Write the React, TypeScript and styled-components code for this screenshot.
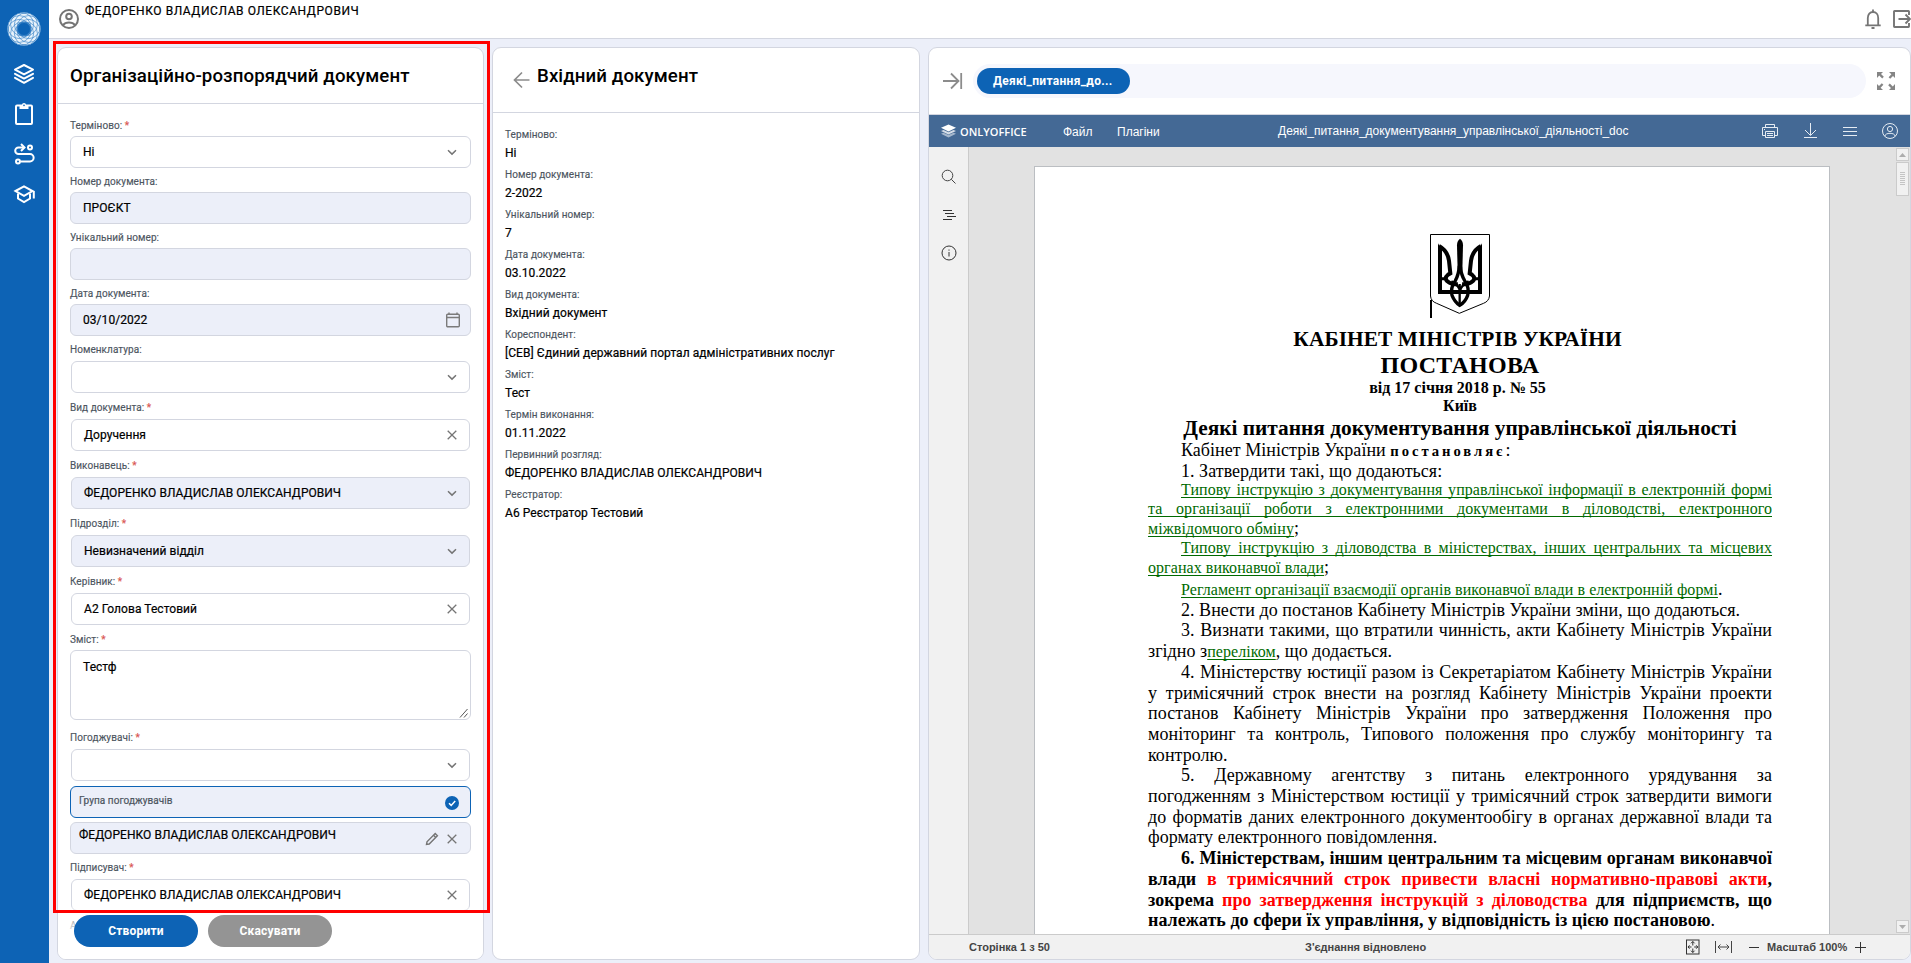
import React from "react";
import styled, { createGlobalStyle } from "styled-components";

const GlobalStyle = createGlobalStyle`
  * { box-sizing: border-box; }
  html, body { margin: 0; padding: 0; overflow: hidden; }
  body { font-family: Roboto, "Liberation Sans", sans-serif; color: #000; }
  svg { display: block; flex: none; }
`;

const line = "#d3d6e0";

/* ---------- shell ---------- */
const Shell = styled.div`
  display: flex;
  width: 1911px;
  height: 963px;
  background: #eceff9;
  overflow: hidden;
`;
const Sidebar = styled.nav`
  flex: 0 0 49px;
  background: #0d63b5;
  display: flex;
  flex-direction: column;
  align-items: center;
  padding: 12px 1px 0 0;
`;
const NavItem = styled.a`
  width: 22px;
  height: 22px;
  margin-bottom: 18px;
`;
const LogoLink = styled.a`
  margin-bottom: 17px;
`;
const Main = styled.div`
  flex: 1;
  min-width: 0;
  display: flex;
  flex-direction: column;
`;
const TopBar = styled.header`
  flex: 0 0 39px;
  background: #fff;
  border-bottom: 1px solid ${line};
  display: flex;
  padding-left: 9px;
`;
const UserIcon = styled.div`
  padding-top: 8px;
`;
const UserName = styled.div`
  margin-left: 5px;
  font-size: 12px;
  font-weight: 400;
  -webkit-text-stroke: 0.2px;
  letter-spacing: 0.57px;
  line-height: 22px;
`;
const TopActions = styled.div`
  margin-left: auto;
  display: flex;
  gap: 8px;
  padding-top: 8px;
  width: 48px;
`;
const Columns = styled.div`
  flex: 1;
  min-height: 0;
  display: flex;
  gap: 8px;
  padding: 8px 0 3px 8px;
`;
const Card = styled.section<{ $w?: number }>`
  ${(p) => (p.$w ? `flex: 0 0 ${p.$w}px;` : "flex: 1; min-width: 0;")}
  position: relative;
  background: #fff;
  border: 1px solid ${line};
  border-radius: 9px;
  overflow: hidden;
  display: flex;
  flex-direction: column;
`;
const Frame = styled.div`
  position: absolute;
  left: 53px;
  top: 41px;
  width: 437px;
  height: 872px;
  border: 3px solid #f00;
  pointer-events: none;
`;

/* ---------- form card ---------- */
const CardHead = styled.div<{ $h: number }>`
  flex: 0 0 ${(p) => p.$h}px;
  border-bottom: 1px solid ${line};
  display: flex;
  padding: 14px 12px 0;
`;
const Title = styled.h1`
  margin: 0;
  font-size: 18.67px;
  font-weight: 500;
  letter-spacing: 0.1px;
  line-height: 28px;
`;
const FormBody = styled.div`
  flex: 1;
  min-height: 0;
  overflow: hidden;
  padding: 8px 12px 0;
`;
const FieldLabel = styled.div<{ $gap?: number }>`
  height: 24px;
  margin-top: ${(p) => p.$gap || 0}px;
  padding-top: 3px;
  font-size: 10px;
  line-height: 21px;
  font-weight: 400;
  -webkit-text-stroke: 0.15px;
  letter-spacing: 0.06px;
  color: #4d565f;
  white-space: nowrap;
`;
const Star = styled.span`
  color: #d9534f;
`;
const Control = styled.div<{ $off?: boolean; $select?: boolean; $active?: boolean; $tall?: boolean }>`
  height: ${(p) => (p.$tall ? 70 : 32)}px;
  margin: ${(p) => (p.$select ? "1px" : "0")};
  border: 1px solid ${(p) => (p.$active ? "#0d63b5" : line)};
  border-radius: 6px;
  background: ${(p) => (p.$off || p.$active ? "#eceff9" : "#fff")};
  display: flex;
  align-items: ${(p) => (p.$tall ? "flex-start" : "center")};
  justify-content: space-between;
  padding: ${(p) => (p.$tall ? 1 : 0)}px ${(p) => (p.$select ? 10 : 11)}px 0 12px;
  font-size: 12px;
  font-weight: 400;
  -webkit-text-stroke: 0.2px;
  letter-spacing: 0.05px;
  line-height: 30px;
  white-space: nowrap;
`;
const Grip = styled.div`
  align-self: flex-end;
  margin: 0 -10px 1px 0;
`;
const Approver = styled(Control)`
  margin-top: ${(p) => (p.$active ? 5 : 4)}px;
  padding: 0 11px 0 8px;
`;
const ApproverText = styled.span<{ $small?: boolean }>`
  font-size: ${(p) => (p.$small ? 10 : 12)}px;
  font-weight: 400;
  letter-spacing: 0.05px;
  color: ${(p) => (p.$small ? "#4d565f" : "#000")};
  padding-bottom: ${(p) => (p.$small ? 3 : 7)}px;
`;
const IconRow = styled.span`
  display: flex;
  gap: 6px;
  align-items: center;
  padding-top: 2px;
`;
const CalendarSlot = styled.span`
  margin-right: -1px;
`;
const Actions = styled.div`
  position: absolute;
  left: 0;
  right: 0;
  bottom: 0;
  height: 52px;
  padding: 8px 0 0 16px;
  display: flex;
  gap: 10px;
  background: linear-gradient(rgba(255, 255, 255, 0.2), #fff 60%);
`;
const Pill = styled.button<{ $muted?: boolean }>`
  width: 124px;
  height: 32px;
  border: 0;
  border-radius: 16px;
  background: ${(p) => (p.$muted ? "#949494" : "#0d63b5")};
  color: #fff;
  font: 700 12px/32px Roboto, sans-serif;
  letter-spacing: 0.2px;
  padding: 0;
`;

/* ---------- info card ---------- */
const Back = styled.div`
  margin: 9px 6px 0 8px;
`;
const InfoBody = styled.dl`
  margin: 0;
  padding: 11px 12px 0;
`;
const InfoLabel = styled.dt`
  font-size: 10px;
  font-weight: 400;
  -webkit-text-stroke: 0.15px;
  letter-spacing: 0.08px;
  color: #4d565f;
  height: 20px;
  line-height: 22px;
`;
const InfoValue = styled.dd`
  margin: 0;
  font-size: 12px;
  font-weight: 400;
  -webkit-text-stroke: 0.2px;
  letter-spacing: 0.05px;
  height: 20px;
  line-height: 18px;
  white-space: nowrap;
`;

/* ---------- viewer card ---------- */
const TabsBar = styled.div`
  flex: 0 0 67px;
  border-bottom: 1px solid ${line};
  display: flex;
  align-items: center;
  padding: 0 15px 0 13px;
`;
const TabStrip = styled.div`
  flex: 1;
  height: 34px;
  margin: 0 11px 0 10px;
  border-radius: 17px;
  background: #f6f7fd;
  padding: 4px;
`;
const Tab = styled.div`
  width: 153px;
  height: 26px;
  border-radius: 13px;
  background: #0d63b5;
  color: #fff;
  font-size: 12px;
  font-weight: 700;
  letter-spacing: 0.3px;
  line-height: 26px;
  padding-left: 16px;
`;
const Toolbar = styled.div`
  flex: 0 0 32px;
  background: #446995;
  color: #fff;
  display: flex;
  align-items: center;
  font: 12px "Liberation Sans", Arial, sans-serif;
  padding-left: 12px;
`;
const Brand = styled.span`
  width: 107px;
  padding-left: 4px;
  font: 600 11px "Open Sans", sans-serif;
`;
const MenuEntry = styled.span<{ $w: number }>`
  width: ${(p) => p.$w}px;
  padding-top: 1px;
`;
const DocName = styled.span`
  width: 482px;
  white-space: nowrap;
`;
const ToolIcons = styled.div`
  display: flex;
  align-items: center;
  gap: 20px;
`;
const Work = styled.div`
  flex: 1;
  min-height: 0;
  display: flex;
  background: #e2e2e2;
`;
const Rail = styled.div`
  flex: 0 0 40px;
  background: #f1f1f1;
  border-right: 1px solid #cbcbcb;
  padding: 22px 0 0 12px;
  display: flex;
  flex-direction: column;
  gap: 22px;
`;
const Canvas = styled.div`
  flex: 1;
  overflow: hidden;
  padding: 19px 0 0 65px;
`;
const Page = styled.article`
  width: 796px;
  height: 900px;
  border: 1px solid #bbbec2;
  background: #fff;
  padding: 67px 56px 0 113px;
  font-family: "Liberation Serif", "Times New Roman", serif;
`;
const Emblem = styled.div`
  margin-left: 282px;
  height: 95px;
`;
type LineProps = {
  $h: number;
  $size?: number;
  $center?: boolean;
  $justify?: boolean;
  $indent?: boolean;
  $bold?: boolean;
  $ls?: number;
  $tail?: number;
};
const TextLine = styled.div<LineProps>`
  width: 624px;
  height: ${(p) => p.$h}px;
  line-height: 20px;
  font-size: ${(p) => p.$size || 18}px;
  font-weight: ${(p) => (p.$bold ? 700 : 400)};
  letter-spacing: ${(p) => p.$ls ?? 0.04}px;
  text-indent: ${(p) => (p.$indent ? 33 : 0)}px;
  padding-right: ${(p) => p.$tail || 0}px;
  white-space: nowrap;
  text-align: ${(p) => (p.$center ? "center" : "left")};
  ${(p) => p.$justify && "white-space: normal; text-align: justify; text-align-last: justify;"}
`;
const Link = styled.span`
  font-size: 16px;
  color: #006a00;
  letter-spacing: 0.06px;
  text-decoration: underline;
  text-underline-offset: 2px;
  text-decoration-thickness: 1px;
  text-decoration-skip-ink: none;
`;
const Red = styled.span`
  color: #f00;
`;
const Light = styled.span`
  font-weight: 400;
`;
const Spaced = styled.b`
  font-size: 14.67px;
  letter-spacing: 2.95px;
`;
const ScrollTrack = styled.div`
  flex: 0 0 14px;
  display: flex;
  flex-direction: column;
  padding: 1px 1px 0 0;
`;
const ScrollBox = styled.div<{ $h: number; $last?: boolean }>`
  width: 13px;
  height: ${(p) => p.$h}px;
  margin-top: ${(p) => (p.$last ? "auto" : "0")};
  margin-bottom: 1px;
  border: 1px solid #cbcbcb;
  background: #f1f1f1;
  display: flex;
  align-items: center;
  justify-content: center;
`;
const StatusBar = styled.footer`
  flex: 0 0 25px;
  background: #f1f1f1;
  border-top: 1px solid #cbcbcb;
  display: flex;
  align-items: center;
  font: bold 11px "Liberation Sans", Arial, sans-serif;
  color: #444;
  padding-left: 40px;
`;
const StatusText = styled.span<{ $w: number }>`
  width: ${(p) => p.$w}px;
  white-space: nowrap;
`;
const ZoomTools = styled.div`
  display: flex;
  align-items: center;
`;
const ZoomText = styled.span`
  width: 96px;
  padding-left: 8px;
  white-space: nowrap;
`;

/* ---------- icons ---------- */
const Logo = () => (
  <svg width="34" height="34" viewBox="-17 -17 34 34" fill="none">
    <circle r="12" stroke="#eaf3fb" strokeWidth="9" />
    {[0, 1, 2, 3, 4, 5, 6, 7].map((i) => (
      <circle
        key={i}
        r="11.5"
        cx={5 * Math.cos(((i + 0.5) * Math.PI) / 4)}
        cy={5 * Math.sin(((i + 0.5) * Math.PI) / 4)}
        stroke="#3f86c9"
        strokeWidth="0.7"
      />
    ))}
  </svg>
);
const Layers = () => (
  <svg width="22" height="22" viewBox="0 0 22 22" fill="none" stroke="#fff" strokeWidth="2" strokeLinejoin="round" strokeLinecap="round">
    <path d="M11 2 20 6.600 11 11.400 2 6.600Z" />
    <path d="M2 10.800 11 15.600 20 10.800M2 14.800 11 19.800 20 14.800" />
  </svg>
);
const Clipboard = () => (
  <svg width="22" height="22" viewBox="0 0 22 22" fill="none">
    <rect x="3" y="2.500" width="16" height="18.500" rx="1" stroke="#fff" strokeWidth="2" />
    <path d="M6.500 2H9a2 2 0 0 1 4 0h2.500v4h-9Z" fill="#fff" />
    <circle cx="11" cy="2.400" r="0.800" fill="#0d63b5" />
  </svg>
);
const Route = () => (
  <svg width="22" height="22" viewBox="0 0 22 22" fill="none" stroke="#fff" strokeWidth="2">
    <circle cx="17" cy="4.500" r="2" />
    <circle cx="5" cy="18.500" r="2" />
    <path d="M10 4.500H5.500a3.300 3.300 0 0 0 0 6.600H17a3.500 3.500 0 0 1 0 7.300H8" />
    <path d="m8 1 3.500 3.500L8 8" />
  </svg>
);
const School = () => (
  <svg width="22" height="22" viewBox="0 0 22 22" fill="none" stroke="#fff" strokeWidth="2">
    <path d="M2.500 8 11 3.300 19.500 8 11 12.800Z" />
    <path d="M5 10.500v5L11 19l6-3.500v-5M20.800 8v7.500" />
  </svg>
);
const Account = () => (
  <svg width="22" height="22" viewBox="0 0 22 22" fill="none" stroke="#757575" strokeWidth="2">
    <circle cx="11" cy="11" r="9" />
    <circle cx="11" cy="8.500" r="2.800" />
    <path d="M5 17.300c2.500-3.600 9.500-3.600 12 0" />
  </svg>
);
const Bell = () => (
  <svg width="20" height="22" viewBox="0 0 20 22" fill="none" stroke="#757575" strokeWidth="1.800">
    <path d="M2.300 17.300h15.400M4.800 17V10c0-3.600 2.200-6 5.200-6s5.200 2.400 5.200 6v7" />
    <path d="M10 4V1.500M8.500 20h3" />
  </svg>
);
const Exit = () => (
  <svg width="20" height="22" viewBox="0 0 20 22" fill="none" stroke="#757575" strokeWidth="1.900">
    <path d="M18 7V3.500Q18 3 17.500 3H3.500Q3 3 3 3.500V18.500q0 .5.500.5h14q.5 0 .5-.5V15" />
    <path d="M7.500 11H19M14.500 6.500 19 11l-4.500 4.500" />
  </svg>
);
const Chevron = () => (
  <svg width="14" height="14" viewBox="0 0 14 14" fill="none" stroke="#757575" strokeWidth="1.500">
    <path d="m3 5.300 4 3.800 4-3.800" />
  </svg>
);
const Cross = () => (
  <svg width="14" height="14" viewBox="0 0 14 14" fill="none" stroke="#757575" strokeWidth="1.300">
    <path d="m2.700 2.700 8.600 8.600m0-8.600-8.600 8.600" />
  </svg>
);
const CalendarIcon = () => (
  <svg width="14" height="16" viewBox="0 0 14 16" fill="none" stroke="#7b7b7b" strokeWidth="1.400">
    <rect x="0.700" y="2.200" width="12.600" height="12.600" rx="1" />
    <path d="M.7 5.500h12.600M3 .5v2M11 .5v2" />
  </svg>
);
const CheckBadge = () => (
  <svg width="14" height="14" viewBox="0 0 14 14" fill="none">
    <circle cx="7" cy="7" r="7" fill="#0d63b5" />
    <path d="m4 7.200 2.200 2.200L10.200 5" stroke="#fff" strokeWidth="1.500" />
  </svg>
);
const Pencil = () => (
  <svg width="14" height="14" viewBox="0 0 14 14" fill="none" stroke="#757575" strokeWidth="1.400">
    <path d="M1.500 12.500l.5-2.700 8.200-8.200 2.200 2.200-8.200 8.200ZM8.600 3.200l2.200 2.200" />
  </svg>
);
const Arrow = () => (
  <svg width="18" height="18" viewBox="0 0 18 18" fill="none" stroke="#8c8c8c" strokeWidth="1.700">
    <path d="M1.500 9h15M9 1.500 1.500 9 9 16.500" />
  </svg>
);
const Collapse = () => (
  <svg width="21" height="18" viewBox="0 0 21 18" fill="none" stroke="#8c8c8c" strokeWidth="1.800">
    <path d="M1 9h15M9 1.500 16.500 9 9 16.500M19.200 1v16" />
  </svg>
);
const Expand = () => (
  <svg width="18" height="18" viewBox="0 0 18 18" fill="#858585">
    {[0, 90, 180, 270].map((r) => (
      <path key={r} transform={`rotate(${r} 9 9)`} d="M0 0h6L4 2l2.800 2.800-1.600 1.600L2.200 3.600 0 6Z" />
    ))}
  </svg>
);
const OfficeMark = () => (
  <svg width="15" height="15" viewBox="0 0 15 15">
    <path d="M0 9.800 2.500 8.700 7.500 11l5-2.300L15 9.800 7.500 13.600Z" fill="#a5b7cc" />
    <path d="M0 7 2.500 5.900l5 2.400 5-2.400L15 7l-7.500 3.600Z" fill="#d5dde7" />
    <path d="M0 3.800 7.500.5 15 3.800 7.500 7.400Z" fill="#fff" />
  </svg>
);
const PrintIcon = () => (
  <svg width="20" height="20" viewBox="0 0 20 20" fill="none" stroke="#e6ecf3">
    <path d="M5.500 6.500v-3h9v3M5.500 14.500h-3v-8h15v8h-3M5.500 10.500h9v6h-9ZM7 12.500h6M7 14.500h6M4 8.500h1" />
  </svg>
);
const SaveIcon = () => (
  <svg width="20" height="20" viewBox="0 0 20 20" fill="none" stroke="#e6ecf3">
    <path d="M10.500 2v12M5 9l5.500 5.500L16 9M4 16.500h13" />
  </svg>
);
const BurgerIcon = () => (
  <svg width="20" height="20" viewBox="0 0 20 20" fill="none" stroke="#e6ecf3">
    <path d="M3 6.500h14M3 10.500h14M3 14.500h14" />
  </svg>
);
const ProfileIcon = () => (
  <svg width="20" height="20" viewBox="0 0 20 20" fill="none" stroke="#e6ecf3">
    <circle cx="10" cy="10" r="7.500" />
    <circle cx="10" cy="8" r="2.600" />
    <path d="M4.800 15.300c0-4 10.400-4 10.400 0" />
  </svg>
);
const FindIcon = () => (
  <svg width="16" height="16" viewBox="0 0 16 16" fill="none" stroke="#444">
    <circle cx="6.500" cy="6.500" r="5.300" />
    <path d="m10.300 10.300 4.200 4.200" />
  </svg>
);
const HeadingsIcon = () => (
  <svg width="16" height="16" viewBox="0 0 16 16" fill="none" stroke="#333">
    <path d="M2 3.500h9M4 6.500h9M6 9.500h9M2 12.500h9" />
  </svg>
);
const InfoIcon = () => (
  <svg width="16" height="16" viewBox="0 0 16 16" fill="none" stroke="#333">
    <circle cx="8" cy="8" r="7" />
    <path d="M8 7v4.500M8 4.500v1.200" />
  </svg>
);
const Trident = () => (
  <svg width="61" height="85" viewBox="0 0 183 255" fill="none" stroke="#000">
    <path d="M1.500 1.500h177V186q-2 16-18 22L88 238 20 208Q3 202 1.500 186Z" strokeWidth="3" />
    <path d="M3 198v54" strokeWidth="6" />
    <path d="M30 44V174H150V44" strokeWidth="12" />
    <path d="M24 28 24 52 36 50ZM156 28 156 52 144 50Z" fill="#000" stroke="none" />
    <path d="M27 36C46 46 54 58 57 80L61 118 54 122Q42 132 52 142 66 154 84 150" strokeWidth="12" />
    <path d="M153 36C134 46 126 58 123 80L119 118 126 122Q138 132 128 142 114 154 96 150" strokeWidth="12" />
    <path d="M30 134h20M150 134h-20" strokeWidth="9" />
    <path d="M90 14q9 6 9 20l-2 78h-14l-2-78q0-14 9-20Z" fill="#000" stroke="none" />
    <path d="M88 96Q86 122 76 140 60 162 66 184 74 204 89 214 106 204 113 184 119 162 104 140 93 122 91 96" strokeWidth="10" />
    <path d="M64 142Q88 156 90 172 92 156 116 142M89 150v64" strokeWidth="7" />
  </svg>
);
const FitPage = () => (
  <svg width="14" height="16" viewBox="0 0 14 16" fill="none" stroke="#333">
    <rect x="0.500" y="1" width="12.500" height="14" />
    <path d="M6.800 2.500v4M6.800 9.500v4M2 8h3.500M8.200 8h3.600M5 4.300l1.800-1.800 1.800 1.800M5 11.700l1.800 1.800 1.800-1.800M3.500 6.300 2 8l1.500 1.700M10.200 6.300 11.800 8l-1.600 1.700" />
  </svg>
);
const FitWidth = () => (
  <svg width="17" height="12" viewBox="0 0 17 12" fill="none" stroke="#444">
    <path d="M.5 0v12M16.500 0v12M3 6h11M5.500 3.500 3 6l2.500 2.500M11.500 3.500 14 6l-2.500 2.500" />
  </svg>
);
const Minus = () => (
  <svg width="10" height="12" viewBox="0 0 10 12" stroke="#333">
    <path d="M0 6.500h10" />
  </svg>
);
const Plus = () => (
  <svg width="12" height="12" viewBox="0 0 12 12" stroke="#333">
    <path d="M0 6.500h11M5.500 1v11" />
  </svg>
);
const ResizeGrip = () => (
  <svg width="10" height="10" viewBox="0 0 10 10" stroke="#555" fill="none">
    <path d="M1 9.500 8.500 1M5 9.500 8.500 5.500" />
  </svg>
);

/* ---------- content ---------- */
const PERSON = "ФЕДОРЕНКО ВЛАДИСЛАВ ОЛЕКСАНДРОВИЧ";

const info: [string, string][] = [
  ["Терміново:", "Ні"],
  ["Номер документа:", "2-2022"],
  ["Унікальний номер:", "7"],
  ["Дата документа:", "03.10.2022"],
  ["Вид документа:", "Вхідний документ"],
  ["Кореспондент:", "[СЕВ] Єдиний державний портал адміністративних послуг"],
  ["Зміст:", "Тест"],
  ["Термін виконання:", "01.11.2022"],
  ["Первинний розгляд:", PERSON],
  ["Реєстратор:", "А6 Реєстратор Тестовий"],
];

const Label = ({ text, required, gap }: { text: string; required?: boolean; gap?: number }) => (
  <FieldLabel $gap={gap}>
    {text} {required && <Star>*</Star>}
  </FieldLabel>
);

const FormCard = () => (
  <Card $w={427}>
    <CardHead $h={56}>
      <Title>Організаційно-розпорядчий документ</Title>
    </CardHead>
    <FormBody>
      <Label text="Терміново:" required />
      <Control>Ні<Chevron /></Control>
      <Label text="Номер документа:" />
      <Control $off>ПРОЄКТ</Control>
      <Label text="Унікальний номер:" />
      <Control $off />
      <Label text="Дата документа:" />
      <Control $off>03/10/2022<CalendarSlot><CalendarIcon /></CalendarSlot></Control>
      <Label text="Номенклатура:" />
      <Control $select><span /><Chevron /></Control>
      <Label text="Вид документа:" required />
      <Control $select>Доручення<Cross /></Control>
      <Label text="Виконавець:" required />
      <Control $select $off>{PERSON}<Chevron /></Control>
      <Label text="Підрозділ:" required />
      <Control $select $off>Невизначений відділ<Chevron /></Control>
      <Label text="Керівник:" required />
      <Control $select>А2 Голова Тестовий<Cross /></Control>
      <Label text="Зміст:" required />
      <Control $tall>Тестф<Grip><ResizeGrip /></Grip></Control>
      <Label text="Погоджувачі:" required gap={4} />
      <Control $select><span /><Chevron /></Control>
      <Approver $active>
        <ApproverText $small>Група погоджувачів</ApproverText>
        <IconRow><CheckBadge /></IconRow>
      </Approver>
      <Approver $off>
        <ApproverText>{PERSON}</ApproverText>
        <IconRow><Pencil /><Cross /></IconRow>
      </Approver>
      <Label text="Підписувач:" required />
      <Control $select>{PERSON}<Cross /></Control>
      <Label text="А" />
    </FormBody>
    <Actions>
      <Pill>Створити</Pill>
      <Pill $muted>Скасувати</Pill>
    </Actions>
  </Card>
);

const InfoCard = () => (
  <Card $w={428}>
    <CardHead $h={65}>
      <Back><Arrow /></Back>
      <Title>Вхідний документ</Title>
    </CardHead>
    <InfoBody>
      {info.map(([k, v]) => (
        <React.Fragment key={k}>
          <InfoLabel>{k}</InfoLabel>
          <InfoValue>{v}</InfoValue>
        </React.Fragment>
      ))}
    </InfoBody>
  </Card>
);

const DocumentText = () => (
  <>
    <TextLine $h={26} $size={21.33} $center $bold $ls={0.1} $tail={5}>КАБІНЕТ МІНІСТРІВ УКРАЇНИ</TextLine>
    <TextLine $h={23} $size={24} $center $bold $ls={0.3}>ПОСТАНОВА</TextLine>
    <TextLine $h={18} $size={16} $center $bold $ls={0} $tail={5}>від 17 січня 2018 р. № 55</TextLine>
    <TextLine $h={22} $size={16} $center $bold $ls={0}>Київ</TextLine>
    <TextLine $h={22} $size={21.33} $center $bold $ls={0}>Деякі питання документування управлінської діяльності</TextLine>
    <TextLine $h={21} $indent>Кабінет Міністрів України <Spaced>постановляє</Spaced>:</TextLine>
    <TextLine $h={19} $indent>1. Затвердити такі, що додаються:</TextLine>
    <TextLine $h={19} $size={16} $indent $justify><Link>Типову інструкцію з документування управлінської інформації в електронній формі</Link></TextLine>
    <TextLine $h={19} $size={16} $justify><Link>та організації роботи з електронними документами в діловодстві, електронного</Link></TextLine>
    <TextLine $h={20}><Link>міжвідомчого обміну</Link>;</TextLine>
    <TextLine $h={19} $size={16} $indent $justify><Link>Типову інструкцію з діловодства в міністерствах, інших центральних та місцевих</Link></TextLine>
    <TextLine $h={22}><Link>органах виконавчої влади</Link>;</TextLine>
    <TextLine $h={21} $indent><Link>Регламент організації взаємодії органів виконавчої влади в електронній формі</Link>.</TextLine>
    <TextLine $h={20} $indent>2. Внести до постанов Кабінету Міністрів України зміни, що додаються.</TextLine>
    <TextLine $h={21} $indent $justify>3. Визнати такими, що втратили чинність, акти Кабінету Міністрів України</TextLine>
    <TextLine $h={21}>згідно з<Link>переліком</Link>, що додається.</TextLine>
    <TextLine $h={21} $indent $justify>4. Міністерству юстиції разом із Секретаріатом Кабінету Міністрів України</TextLine>
    <TextLine $h={20} $justify>у тримісячний строк внести на розгляд Кабінету Міністрів України проекти</TextLine>
    <TextLine $h={21} $justify>постанов Кабінету Міністрів України про затвердження Положення про</TextLine>
    <TextLine $h={21} $justify>моніторинг та контроль, Типового положення про службу моніторингу та</TextLine>
    <TextLine $h={20}>контролю.</TextLine>
    <TextLine $h={21} $indent $justify>5. Державному агентству з питань електронного урядування за</TextLine>
    <TextLine $h={21} $justify>погодженням з Міністерством юстиції у тримісячний строк затвердити вимоги</TextLine>
    <TextLine $h={20} $justify>до форматів даних електронного документообігу в органах державної влади та</TextLine>
    <TextLine $h={21}>формату електронного повідомлення.</TextLine>
    <TextLine $h={21} $indent $justify $bold>6. Міністерствам, іншим центральним та місцевим органам виконавчої</TextLine>
    <TextLine $h={21} $justify $bold>влади <Red>в тримісячний строк привести власні нормативно-правові акти</Red>,</TextLine>
    <TextLine $h={20} $justify $bold>зокрема <Red>про затвердження інструкцій з діловодства</Red> для підприємств, що</TextLine>
    <TextLine $h={21} $bold>належать до сфери їх управління, у відповідність із цією постановою<Light>.</Light></TextLine>
  </>
);

const ViewerCard = () => (
  <Card>
    <TabsBar>
      <Collapse />
      <TabStrip><Tab>Деякі_питання_до...</Tab></TabStrip>
      <Expand />
    </TabsBar>
    <Toolbar>
      <OfficeMark />
      <Brand>ONLYOFFICE</Brand>
      <MenuEntry $w={54}>Файл</MenuEntry>
      <MenuEntry $w={161}>Плагіни</MenuEntry>
      <DocName>Деякі_питання_документування_управлінської_діяльності_doc</DocName>
      <ToolIcons><PrintIcon /><SaveIcon /><BurgerIcon /><ProfileIcon /></ToolIcons>
    </Toolbar>
    <Work>
      <Rail><FindIcon /><HeadingsIcon /><InfoIcon /></Rail>
      <Canvas>
        <Page>
          <Emblem><Trident /></Emblem>
          <DocumentText />
        </Page>
      </Canvas>
      <ScrollTrack>
        <ScrollBox $h={13}>
          <svg width="7" height="4" viewBox="0 0 7 4" fill="#adadad"><path d="M0 4 3.500 0 7 4Z" /></svg>
        </ScrollBox>
        <ScrollBox $h={34}>
          <svg width="5" height="14" viewBox="0 0 5 14" stroke="#c4c4c4"><path d="M0 .5h5M0 2.500h5M0 4.500h5M0 6.500h5M0 8.500h5M0 10.500h5M0 12.500h5" /></svg>
        </ScrollBox>
        <ScrollBox $h={13} $last>
          <svg width="7" height="4" viewBox="0 0 7 4" fill="#adadad"><path d="M0 0 3.500 4 7 0Z" /></svg>
        </ScrollBox>
      </ScrollTrack>
    </Work>
    <StatusBar>
      <StatusText $w={336}>Сторінка 1 з 50</StatusText>
      <StatusText $w={381}>З'єднання відновлено</StatusText>
      <ZoomTools>
        <StatusText $w={29}><FitPage /></StatusText>
        <StatusText $w={34}><FitWidth /></StatusText>
        <Minus />
        <ZoomText>Масштаб 100%</ZoomText>
        <Plus />
      </ZoomTools>
    </StatusBar>
  </Card>
);

const App = () => (
  <>
    <GlobalStyle />
    <Shell>
      <Sidebar>
        <LogoLink><Logo /></LogoLink>
        <NavItem><Layers /></NavItem>
        <NavItem><Clipboard /></NavItem>
        <NavItem><Route /></NavItem>
        <NavItem><School /></NavItem>
      </Sidebar>
      <Main>
        <TopBar>
          <UserIcon><Account /></UserIcon>
          <UserName>{PERSON}</UserName>
          <TopActions><Bell /><Exit /></TopActions>
        </TopBar>
        <Columns>
          <FormCard />
          <InfoCard />
          <ViewerCard />
        </Columns>
      </Main>
    </Shell>
    <Frame />
  </>
);

export default App;
